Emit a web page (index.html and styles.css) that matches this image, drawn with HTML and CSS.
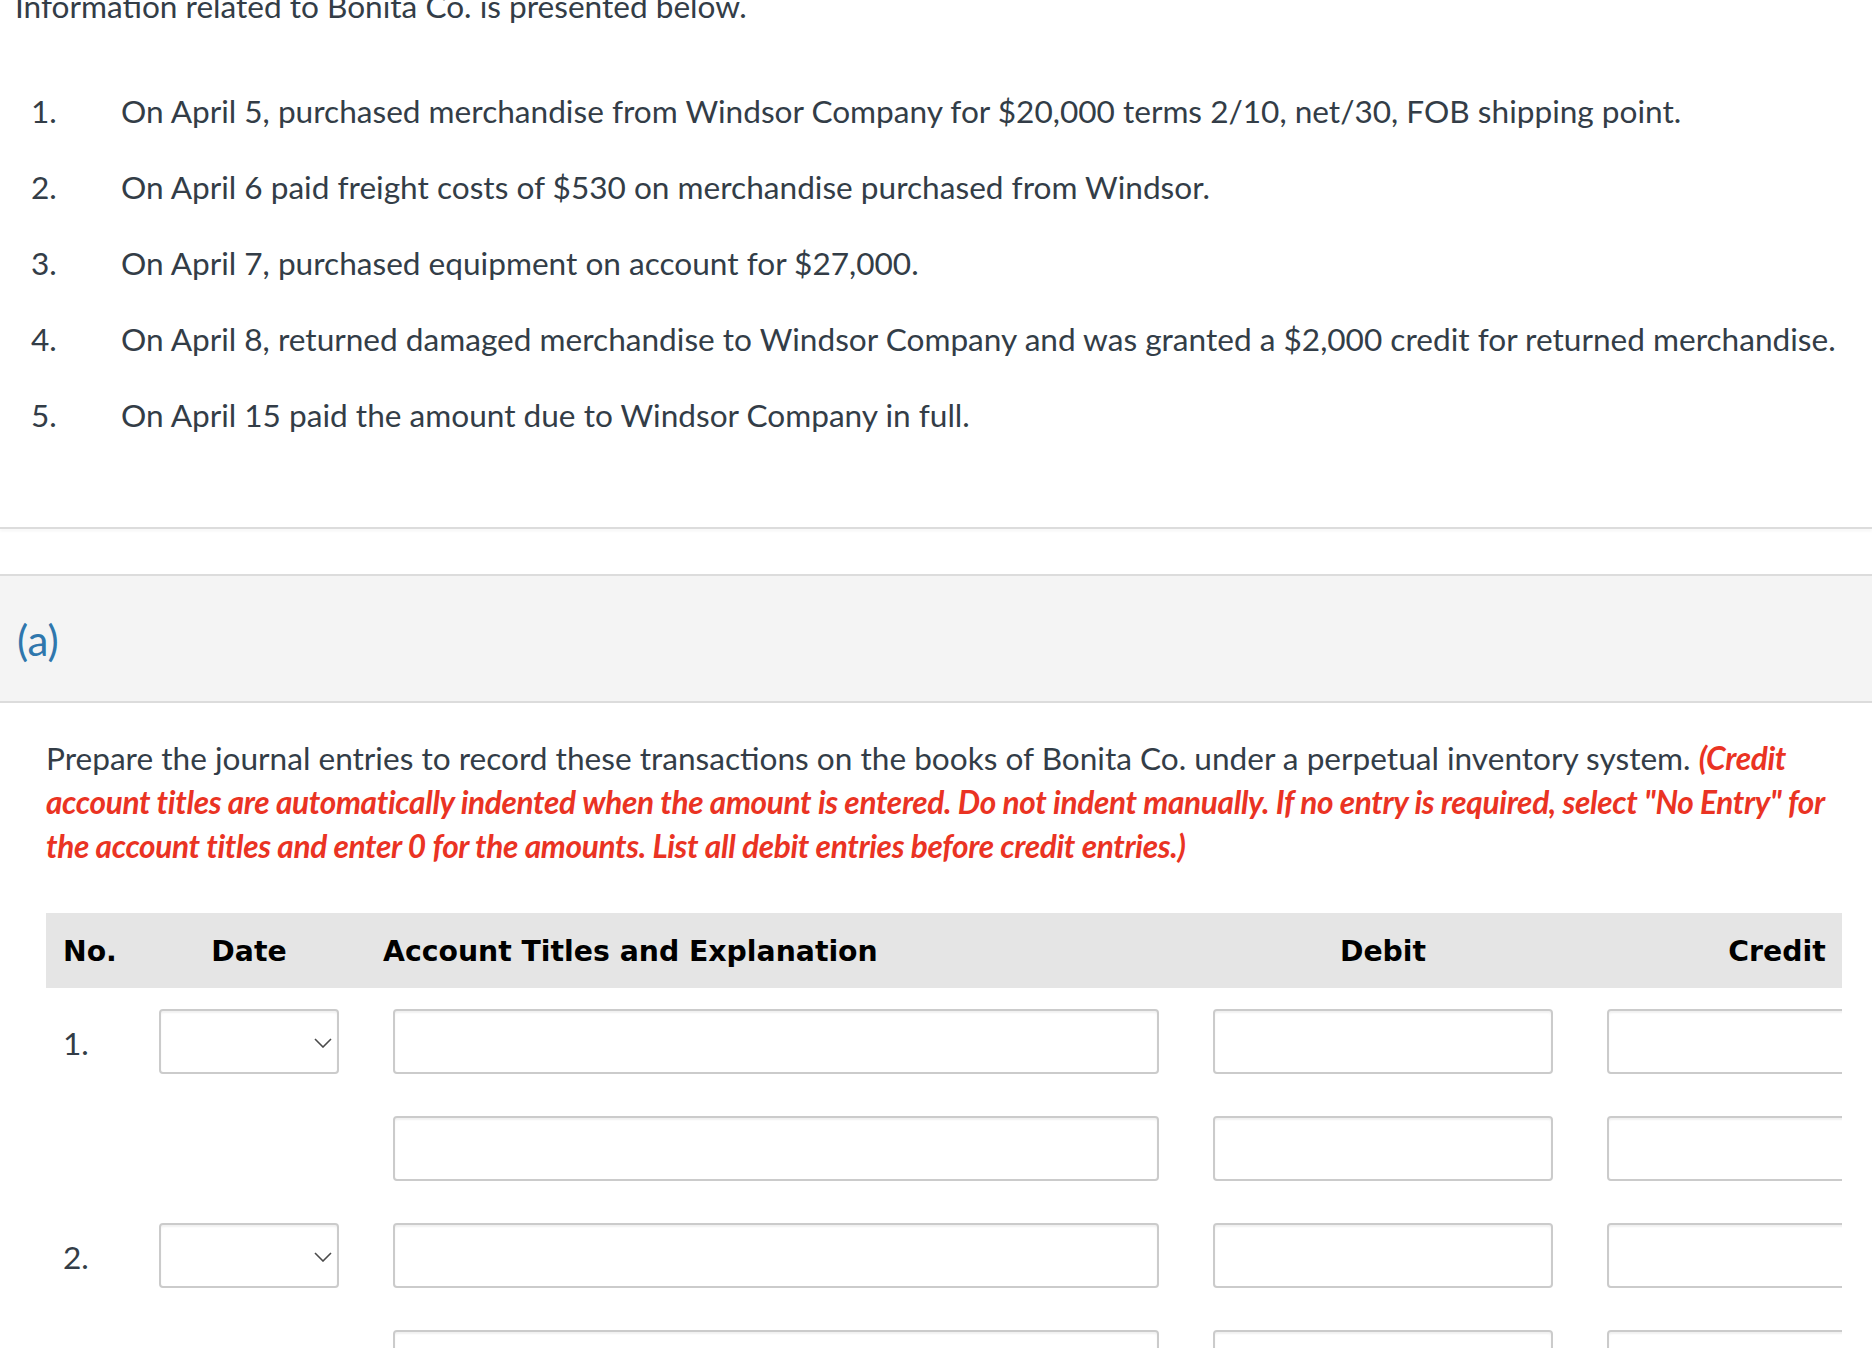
FILE: index.html
```html
<!DOCTYPE html>
<html lang="en">
<head>
  <meta charset="UTF-8" />
  <title>Bonita Co. - Journal Entries</title>
  <link rel="stylesheet" href="styles.css">
</head>
<body>
  <!-- Question stem -->
  <p class="intro">Information related to Bonita Co. is presented below.</p>
  <ol class="items">
    <li><span class="num">1.</span><span>On April 5, purchased merchandise from Windsor Company for $20,000 terms 2/10, net/30, FOB shipping point.</span></li>
    <li><span class="num">2.</span><span>On April 6 paid freight costs of $530 on merchandise purchased from Windsor.</span></li>
    <li><span class="num">3.</span><span>On April 7, purchased equipment on account for $27,000.</span></li>
    <li><span class="num">4.</span><span>On April 8, returned damaged merchandise to Windsor Company and was granted a $2,000 credit for returned merchandise.</span></li>
    <li><span class="num">5.</span><span>On April 15 paid the amount due to Windsor Company in full.</span></li>
  </ol>
  <div class="rule"></div>

  <!-- Part (a) -->
  <div class="part-bar">(a)</div>
  <div class="part-body">
    <p class="instructions">Prepare the journal entries to record these transactions on the books of Bonita Co. under a perpetual inventory system. <em class="note">(Credit account titles are automatically indented when the amount is entered. Do not indent manually. If no entry is required, select "No Entry" for the account titles and enter 0 for the amounts. List all debit entries before credit entries.)</em></p>

    <div class="journal">
      <div class="journal-head">
        <div class="head-no">No.</div>
        <div class="head-center">Date</div>
        <div class="head-acct"><span>Account Titles and Explanation</span></div>
        <div class="head-center">Debit</div>
        <div class="head-center">Credit</div>
      </div>

      <div class="journal-body">
        <!-- entry 1 -->
        <div class="row-no">1.</div>
        <div class="select">
          <svg width="18" height="10" viewBox="0 0 18 10"><path d="M1 1 L9 9 L17 1" fill="none" stroke="#4a4a4a" stroke-width="1.6"/></svg>
        </div>
        <div class="field"></div>
        <div class="field"></div>
        <div class="field"></div>

        <div class="row-no"></div>
        <div></div>
        <div class="field"></div>
        <div class="field"></div>
        <div class="field"></div>

        <!-- entry 2 -->
        <div class="row-no">2.</div>
        <div class="select">
          <svg width="18" height="10" viewBox="0 0 18 10"><path d="M1 1 L9 9 L17 1" fill="none" stroke="#4a4a4a" stroke-width="1.6"/></svg>
        </div>
        <div class="field"></div>
        <div class="field"></div>
        <div class="field"></div>

        <div class="row-no"></div>
        <div></div>
        <div class="field"></div>
        <div class="field"></div>
        <div class="field"></div>
      </div>
    </div>
  </div>
</body>
</html>
```

FILE: styles.css
```css
/* Base */
html, body {
  margin: 0;
  padding: 0;
  background: #ffffff;
  font-family: 'Lato', 'Open Sans', sans-serif;
  font-size: 31.6px;
  color: #333d47;
  overflow-x: hidden;
}
/* Question stem (page is scrolled a little, so the first line is cut) */
.intro {
  margin: -13px 0 0 0;
  padding-left: 15px;
  line-height: 38px;
}
.items {
  list-style: none;
  margin: 48px 0 0 0;
  padding: 0 0 0 31px;
}
.items li {
  display: flex;
  line-height: 76px;
}
.items .num {
  width: 90px;
  flex-shrink: 0;
}
.rule {
  margin-top: 74px;
  border-top: 2px solid #dcdcdc;
  box-shadow: 0 2px 3px rgba(0,0,0,0.05);
}
/* Part header bar */
.part-bar {
  margin-top: 45px;
  background: #f4f4f4;
  border-top: 2px solid #dcdcdc;
  border-bottom: 2px solid #dcdcdc;
  padding: 42px 0 38px 17px;
  font-size: 42px;
  line-height: 45px;
  color: #2f77ad;
}
.part-body {
  padding: 0 30px 0 46px;
}
.instructions {
  margin: 33px 0 0 0;
  line-height: 44px;
}
.note {
  color: #ea3323;
  font-weight: 700;
  font-style: italic;
  letter-spacing: -0.34px;
}
/* Journal table: wider than the page, clipped on the right */
.journal {
  margin-top: 45px;
  overflow: hidden;
}
.journal-head,
.journal-body {
  display: grid;
  grid-template-columns: 59px 180px 766px 340px 340px;
  column-gap: 54px;
  width: max-content;
}
.journal-head {
  background: #e5e5e5;
  height: 75px;
  align-items: center;
  padding-top: 2px;
  box-sizing: border-box;
  font-family: 'DejaVu Sans', 'Verdana', sans-serif;
  font-weight: 700;
  font-size: 28.3px;
  color: #000000;
  white-space: nowrap;
}
.head-no { padding-left: 17px; }
.head-center { text-align: center; }
.head-acct span { margin-left: -10px; }

.journal-body {
  margin-top: 21px;
  grid-auto-rows: 65px;
  row-gap: 42px;
}
.row-no {
  display: flex;
  align-items: center;
  padding-left: 17px;
  padding-top: 2px;
}
.field, .select {
  border: 2px solid #cbcbcb;
  border-radius: 4px;
  background: #ffffff;
  box-shadow: inset 0 2px 2px rgba(0,0,0,0.06);
}
.select {
  display: flex;
  align-items: center;
  justify-content: flex-end;
  padding-right: 5px;
  padding-top: 2px;
}
```
